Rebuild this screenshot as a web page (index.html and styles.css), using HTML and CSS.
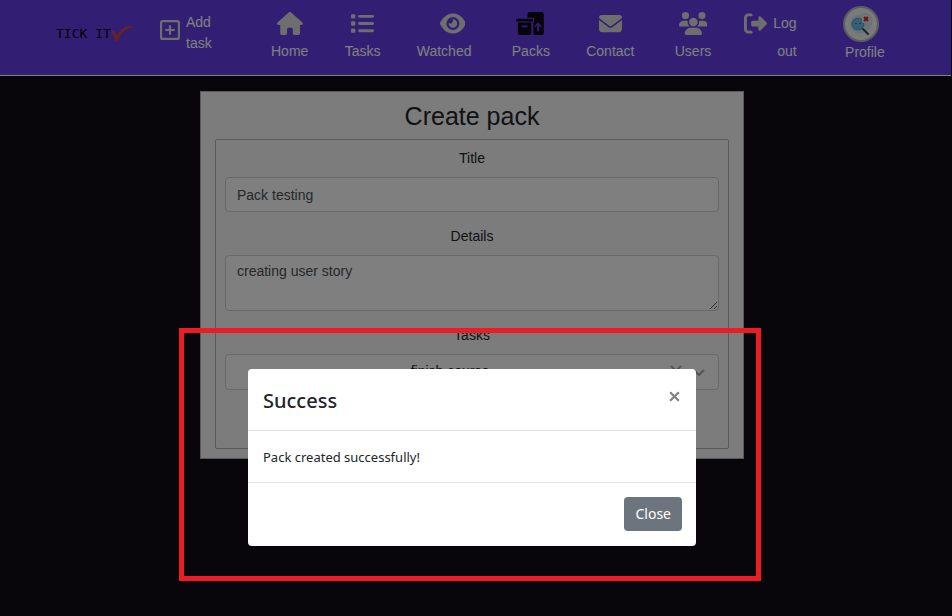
FILE: index.html
```html
<!DOCTYPE html>
<html lang="en">
<head>
<meta charset="utf-8">
<meta name="viewport" content="width=device-width, initial-scale=1">
<title>Tick It</title>
<link rel="stylesheet" href="styles.css">
</head>
<body>
<header class="navbar">
  <a class="brand" href="#" aria-label="Tick It home">
    <span class="brand-name">TICK IT</span>
    <svg class="brand-tick" viewBox="0 0 22 18" aria-hidden="true"><path d="M0 7C2 5 4 6 6 11C9 5 14 1 20 1Q22 1 20 3C13 4 10 8 7 15Q5 18 4 14C3 11 2 8 0 7Z"/></svg>
  </a>
  <a class="add-task" href="#">
    <svg class="icon-add" viewBox="0 0 448 448" aria-hidden="true"><path fill-rule="evenodd" d="M64 0H384Q448 0 448 64V384Q448 448 384 448H64Q0 448 0 384V64Q0 0 64 0ZM64 48Q48 48 48 64V384Q48 400 64 400H384Q400 400 400 384V64Q400 48 384 48ZM200 312V248H136Q112 248 112 224T136 200H200V136Q200 112 224 112T248 136V200H312Q336 200 336 224T312 248H248V312Q248 336 224 336T200 312Z"/></svg>
    <span>Add task</span>
  </a>
  <nav class="links" aria-label="Main">
    <a class="link" href="#">
      <svg class="icon" viewBox="0 0 576 512" aria-hidden="true"><path d="M575.8 255.5c0 18-15 32.1-32 32.1h-32l.7 160.2c0 2.700-.2 5.400-.5 8.100V472c0 22.100-17.900 40-40 40h-80c-22.100 0-40-17.900-40-40v-88c0-17.700-14.300-32-32-32h-64c-17.700 0-32 14.300-32 32v88c0 22.100-17.900 40-40 40h-72c-22.100 0-40-17.900-40-40V287.600H32c-18 0-32-14-32-32.100 0-9 3-17 10-24L266.400 8c7-7 15-8 22-8s15 2 21 7l255.400 224.500c8 7 12 15 11 24z"/></svg>
      <span>Home</span>
    </a>
    <a class="link" href="#">
      <svg class="icon" viewBox="0 0 512 512" aria-hidden="true"><rect y="48" width="96" height="96" rx="24"/><rect y="208" width="96" height="96" rx="24"/><rect y="368" width="96" height="96" rx="24"/><rect x="160" y="64" width="352" height="64" rx="32"/><rect x="160" y="224" width="352" height="64" rx="32"/><rect x="160" y="384" width="352" height="64" rx="32"/></svg>
      <span>Tasks</span>
    </a>
    <a class="link link-watched" href="#">
      <svg class="icon icon-eye" viewBox="0 0 576 512" aria-hidden="true"><path fill-rule="evenodd" d="M288 32c-80.800 0-145.500 36.800-192.600 80.600C48.600 156 17.300 208 2.500 243.700c-3.300 7.900-3.300 16.700 0 24.600C17.300 304 48.600 356 95.400 399.400 142.500 443.200 207.200 480 288 480s145.500-36.800 192.600-80.600c46.800-43.500 78.100-95.400 93-131.100 3.300-7.900 3.300-16.700 0-24.600-14.900-35.700-46.200-87.700-93-131.100C433.500 68.800 368.800 32 288 32zM144 256a144 144 0 1 1 288 0 144 144 0 1 1-288 0zM288 192c0 35.300-28.700 64-64 64-7.100 0-13.900-1.200-20.300-3.300-5.500-1.800-11.900 1.600-11.700 7.400.3 6.900 1.300 13.800 3.200 20.700 13.700 51.200 66.400 81.600 117.600 67.900s81.600-66.400 67.900-117.600c-11.100-41.500-47.800-69.400-88.600-71.100-5.800-.2-9.200 6.100-7.400 11.700 2.100 6.400 3.300 13.200 3.300 20.300z"/></svg>
      <span>Watched</span>
    </a>
    <a class="link" href="#">
      <svg class="icon icon-packs" viewBox="0 0 30 24" aria-hidden="true"><path fill-rule="evenodd" d="M14 0H27Q29 0 29 2V22Q29 24 27 24H18V11H19V6H12V2Q12 0 14 0ZM23 11L19 15L20 16L22 14V20H24V14L26 16L27 15Z"/><path d="M1 7H17Q18 7 18 8V10H0V8Q0 7 1 7Z"/><path fill-rule="evenodd" d="M2 11H16V22Q16 24 14 24H4Q2 24 2 22ZM6 14V16H12V14Z"/></svg>
      <span>Packs</span>
    </a>
    <a class="link" href="#">
      <svg class="icon" viewBox="0 0 512 512" aria-hidden="true"><path d="M48 64C21.500 64 0 85.500 0 112c0 15.100 7.100 29.300 19.200 38.400l217.600 163.200c11.400 8.500 27 8.500 38.400 0l217.600-163.200C504.900 141.300 512 127.100 512 112c0-26.500-21.500-48-48-48H48zM0 176v208c0 35.300 28.700 64 64 64h384c35.300 0 64-28.700 64-64V176L294.400 339.200c-22.800 17.100-54 17.100-76.800 0L0 176z"/></svg>
      <span>Contact</span>
    </a>
    <a class="link link-users" href="#">
      <svg class="icon icon-users" viewBox="0 0 640 512" aria-hidden="true"><path d="M144 0a80 80 0 1 1 0 160 80 80 0 1 1 0-160zM512 0a80 80 0 1 1 0 160 80 80 0 1 1 0-160zM0 298.700C0 239.800 47.800 192 106.700 192h42.700c15.900 0 31 3.500 44.600 9.700-1.300 7.200-1.900 14.700-1.900 22.300 0 38.200 16.800 72.500 43.300 96H21.300C9.600 320 0 310.400 0 298.700zM405.300 320h-.7c26.600-23.500 43.300-57.800 43.300-96 0-7.600-.7-15-1.900-22.300 13.600-6.300 28.700-9.700 44.600-9.700h42.700C592.200 192 640 239.800 640 298.700c0 11.800-9.600 21.300-21.300 21.300zM224 224a96 96 0 1 1 192 0 96 96 0 1 1-192 0zM128 485.300C128 411.700 187.700 352 261.300 352h117.300C452.300 352 512 411.700 512 485.300c0 14.700-11.900 26.700-26.700 26.700H154.700c-14.700 0-26.700-11.900-26.700-26.700z"/></svg>
      <span>Users</span>
    </a>
    <a class="link link-logout" href="#">
      <svg class="icon" viewBox="0 0 512 512" aria-hidden="true"><path d="M502.600 278.600c12.500-12.500 12.500-32.800 0-45.300l-128-128C354 86 320 98 320 128v64H192q-32 0-32 32v64q0 32 32 32h128v64c0 30 34 42 54.600 22.600zM160 96c17.700 0 32-14.300 32-32s-14.300-32-32-32H96C43 32 0 75 0 128v256c0 53 43 96 96 96h64c17.700 0 32-14.300 32-32s-14.300-32-32-32H96c-17.700 0-32-14.300-32-32V128c0-17.700 14.300-32 32-32z"/></svg>
      <span>Log out</span>
    </a>
    <a class="link link-profile" href="#">
      <svg class="avatar" viewBox="0 0 36 36" aria-hidden="true"><circle cx="18" cy="18" r="17" fill="#f4f4f4" stroke="#bbb" stroke-width="2"/><path d="M8 15Q9 8 17 9Q26 4 29 12Q31 20 24 25Q16 31 10 25Q5 21 8 15Z" fill="#cfeaf5"/><path d="M20 23L25 28" stroke="#444" stroke-width="2" stroke-linecap="round"/><circle cx="15" cy="18" r="6" fill="#6cc0e4" stroke="#4a9fc6"/><path d="M13 17V18M17 17V18" stroke="#246" fill="none"/><rect x="19" y="9" width="8" height="8" rx="2" fill="#f8e4e6"/><path d="M21 11L25 15M25 11L21 15" stroke="#d22" stroke-width="2"/></svg>
      <span>Profile</span>
    </a>
  </nav>
</header>

<main class="page">
  <section class="card">
    <h1 class="card-title">Create pack</h1>
    <form class="form">
      <label for="title">Title</label>
      <input class="control" id="title" type="text" value="Pack testing">
      <label for="details">Details</label>
      <textarea class="control details" id="details">creating user story</textarea>
      <label for="tasks">Tasks</label>
      <div class="picker">
        <select class="control tasks" id="tasks"><option>finish course</option></select>
        <span class="picker-icons" aria-hidden="true">
          <svg viewBox="0 0 14 14"><path d="M2 1L12 11M12 1L2 11"/></svg>
          <svg viewBox="0 0 14 14"><path d="M2 5L7 10L12 5"/></svg>
        </span>
      </div>
    </form>
  </section>
</main>

<div class="backdrop"></div>
<div class="overlay">
  <div class="highlight">
    <div class="modal" role="dialog" aria-labelledby="modal-title">
      <div class="modal-header">
        <h2 class="modal-title" id="modal-title">Success</h2>
        <button class="dismiss" type="button" aria-label="Dismiss"><svg viewBox="0 0 12 12" aria-hidden="true"><path d="M2 2L10 10M10 2L2 10"/></svg></button>
      </div>
      <p class="modal-body">Pack created successfully!</p>
      <div class="modal-footer"><button class="close" type="button">Close</button></div>
    </div>
  </div>
</div>
</body>
</html>
```
FILE: styles.css
```css
* { box-sizing: border-box; }

body {
  margin: 0;
  min-height: 100vh;
  background: #100c16;
  color: #212529;
  font: 14px/21px "Liberation Sans", Arial, sans-serif;
}

h1, h2, p { margin: 0; font-weight: 400; }

/* Navigation */
.navbar {
  display: flex;
  align-items: flex-start;
  height: 76px;
  margin-right: 1px;
  padding-left: 56px;
  background: #643ee6;
  border-bottom: 1px solid #fff;
}
.navbar a { color: #fff; text-decoration: none; }
.navbar svg { display: block; }

.brand { display: flex; align-items: center; margin-top: 24px; width: 104px; }
.navbar .brand-name { color: #000; font: 13px/20px "DejaVu Sans Mono", monospace; }
.brand-tick { width: 22px; height: 18px; fill: #e04434; }

.add-task { display: flex; gap: 6px; width: 80px; margin-top: 12px; }
.add-task span { width: 32px; }
.icon-add { width: 20px; height: 20px; margin-top: 8px; fill: #dcdcdc; }

.links {
  flex: 1;
  display: flex;
  justify-content: space-between;
  margin-left: 31px;
  padding-right: 64px;
}
.link { display: flex; flex-direction: column; align-items: center; padding-top: 12px; line-height: 28px; }
.icon { height: 23px; margin-bottom: 2px; fill: #dcdcdc; }
.icon-packs { fill: #0c0812; }
.icon-eye { align-self: flex-end; margin-right: 6px; }
.link-watched { margin-right: 4px; }
.link-users { margin-left: 4px; }
.link-logout { flex-direction: row; align-items: flex-start; margin: 0 10px 0 -4px; padding-top: 9px; gap: 6px; }
.link-logout .icon { margin-top: 3px; }
.link-logout span { width: 24px; text-align: right; }
.link-profile { padding-top: 6px; }
.avatar { width: 36px; height: 36px; margin-right: 8px; margin-bottom: -4px; }

/* Form card */
.page { display: flex; justify-content: center; padding: 15px 8px 0 0; }
.card {
  width: 544px;
  padding: 9px 14px;
  background: #f8f8f8;
  border: 1px solid #b4b4b4;
}
.card-title { font-size: 25px; line-height: 30px; text-align: center; margin-bottom: 8px; }
.form {
  display: flex;
  flex-direction: column;
  padding: 8px 9px 58px;
  border: 1px solid #b4b4b4;
  border-radius: 2px;
}
.form label { margin-bottom: 8px; text-align: center; }
.control {
  display: block;
  width: 100%;
  height: 35px;
  margin: 0 0 14px;
  padding: 5px 11px;
  background: #fff;
  border: 1px solid #ced4da;
  border-radius: 4px;
  color: #495057;
  font: inherit;
}
.details { height: 56px; resize: vertical; }
.picker { position: relative; }
.tasks { height: 36px; margin: 0; padding: 4px 55px 6px 11px; appearance: none; text-align: center; text-align-last: center; color: #212529; }
.picker-icons { position: absolute; top: 11px; right: 13px; display: flex; gap: 9px; }
.picker-icons svg { width: 14px; height: 14px; fill: none; stroke: #aaa; stroke-width: 2; }

/* Modal */
.backdrop { position: fixed; inset: 0; background: rgba(0, 0, 0, 0.5); }
.overlay { position: fixed; inset: 0; display: flex; justify-content: center; align-items: flex-start; padding: 328px 12px 0 0; }
.highlight { width: 582px; padding: 36px 60px 30px 64px; border: 5px solid #ed1c24; }
.modal {
  background: #fff;
  border-radius: 4px;
  font-family: "Noto Sans", "Open Sans", sans-serif;
  font-size: 13px;
}
.modal-header { display: flex; justify-content: space-between; padding: 16px 15px 14px; border-bottom: 1px solid #dee2e6; }
.modal-title { font-size: 20px; line-height: 31px; font-weight: 500; }
.modal button { border: 0; cursor: pointer; }
.dismiss { align-self: flex-start; margin-top: 5px; padding: 0; background: none; }
.dismiss svg { display: block; width: 13px; height: 13px; fill: none; stroke: #7f7f7f; stroke-width: 2; }
.modal-body { padding: 16px 15px 14px; border-bottom: 1px solid #dee2e6; }
.modal-footer { display: flex; justify-content: flex-end; padding: 14px 14px 15px; }
.close { padding: 6px 11px; background: #6c757d; color: #fff; border-radius: 4px; font: inherit; font-size: 14px; line-height: 22px; }
```
